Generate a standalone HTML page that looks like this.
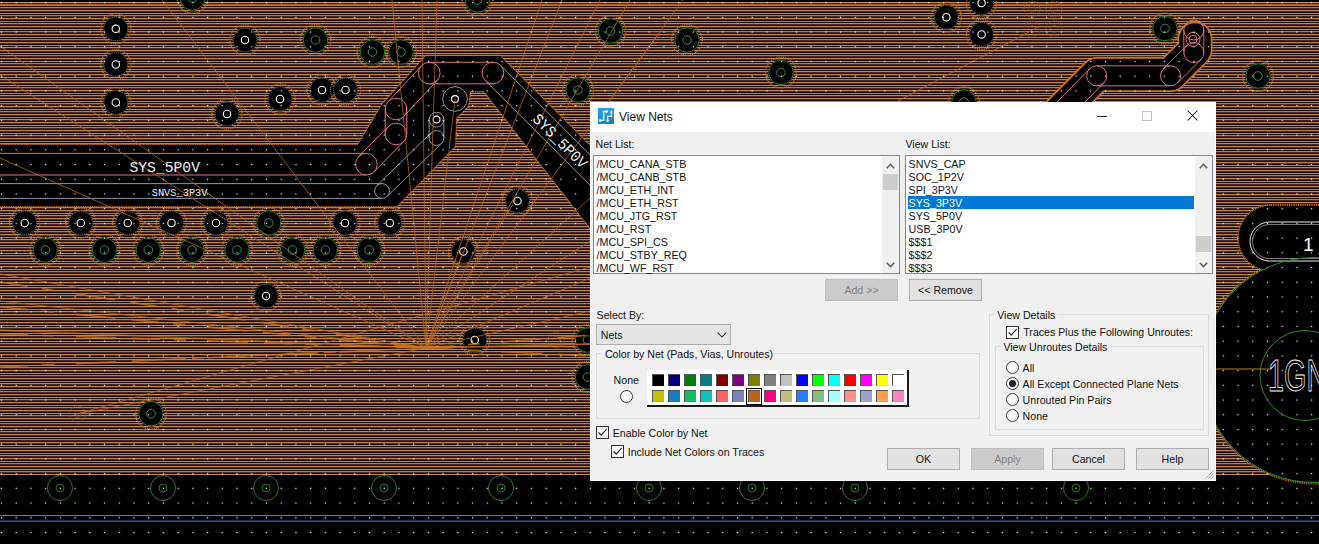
<!DOCTYPE html>
<html><head><meta charset="utf-8"><style>*{margin:0;padding:0;box-sizing:border-box}
html,body{width:1319px;height:544px;overflow:hidden;background:#000}
body{position:relative;font-family:"Liberation Sans",sans-serif;font-size:12px;color:#000}
.pcb{position:absolute;left:0;top:0;display:block}
.dlg{position:absolute;left:590px;top:102px;width:626px;height:379px;background:#f0f0f0;box-shadow:inset 1px 0 #fff,inset -1px 0 #fff,inset 0 -1px #fff}
.dlg>*{position:absolute}
.tb{left:0;top:0;width:626px;height:30px;background:#fff}
.t{white-space:nowrap;line-height:14px;color:#111}
.lb{background:#fff;border:1px solid #828790}
.btn{background:#e1e1e1;border:1px solid #adadad}
.btn.dis{background:#cccccc;border-color:#bfbfbf}
.combo{background:#e5e5e5;border:1px solid #adadad}
.grp{border:1px solid #dcdcdc}
.gtbg{background:#f0f0f0}
.radio{width:13px;height:13px;border-radius:50%;border:1px solid #333;background:#fff}
.radio.sel::after{content:"";position:absolute;left:2px;top:2px;width:7px;height:7px;border-radius:50%;background:#222}
.chk{width:13px;height:13px;border:1px solid #333;background:#fff}
.pal{background:#fff;border-right:2px solid #1a1a1a;border-bottom:2px solid #1a1a1a}
.sw{width:12px;height:12px;border-top:1px solid #555;border-left:1px solid #555}
.swsel{width:16px;height:17px;border:1.6px solid #000}
</style></head>
<body><svg class="pcb" width="1319" height="544" viewBox="0 0 1319 544"><defs>
<pattern id="st" x="0" y="2" width="40" height="24" patternUnits="userSpaceOnUse"><rect width="40" height="24" fill="#1e0600"/><rect y="0" width="40" height="1" fill="#c08a50"/><rect y="1" width="40" height="1" fill="#4a2c14"/><rect y="3" width="40" height="1" fill="#c08a50"/><rect y="5" width="40" height="1" fill="#d47a22"/><rect y="6" width="40" height="1" fill="#4a2c14"/><rect y="8" width="40" height="1" fill="#c08a50"/><rect y="9" width="40" height="1" fill="#4a2c14"/><rect y="11" width="40" height="1" fill="#c08a50"/><rect y="13" width="40" height="1" fill="#d47a22"/><rect y="14" width="40" height="1" fill="#4a2c14"/><rect y="16" width="40" height="1" fill="#c08a50"/><rect y="17" width="40" height="1" fill="#4a2c14"/><rect y="19" width="40" height="1" fill="#d47a22"/><rect y="21" width="40" height="1" fill="#c08a50"/><rect y="22" width="40" height="1" fill="#4a2c14"/></pattern>
<pattern id="dt" x="-5.86" y="-4.76" width="14.72" height="14.72" patternUnits="userSpaceOnUse"><rect x="6.75" y="6.75" width="1.25" height="1.25" fill="#f4f4f4"/></pattern>
</defs><rect width="1319" height="544" fill="#000"/>
<rect x="0" y="2" width="1319" height="473" fill="url(#st)"/>
<rect x="0" y="4.3" width="1319" height="1.6" fill="#d87818"/>
<path d="M-10 145 L358 145 L382 105 L426 56 L500 56 L740 296 L640 292 L484 91 L470 91 L468 106 L456 118 L455 146 L397 206 L-10 206 Z" fill="#000" stroke="#d07416" stroke-width="3" stroke-linejoin="round" stroke-dasharray="0.9 0.9"/>
<circle cx="455" cy="99" r="14" fill="#000" stroke="#d07416" stroke-width="1.5" stroke-dasharray="0.9 0.9"/>
<path d="M-10 145 L358 145 L382 105 L426 56 L500 56 L740 296 L640 292 L484 91 L470 91 L468 106 L456 118 L455 146 L397 206 L-10 206 Z" fill="#000"/>
<circle cx="455" cy="99" r="13" fill="#000"/>
<path d="M1030 142 L1097 74.5 L1170.5 74.5 L1195 50 L1195 39" stroke="#d07416" stroke-width="35" fill="none" stroke-linejoin="round" stroke-linecap="round" stroke-dasharray="0.9 0.9"/>
<path d="M1030 142 L1097 74.5 L1170.5 74.5 L1195 50 L1195 39" stroke="#000" stroke-width="31.5" fill="none" stroke-linejoin="round" stroke-linecap="round"/>
<circle cx="1314" cy="370" r="113.5" fill="#000" stroke="#d07416" stroke-width="2" stroke-dasharray="0.9 0.9"/>
<rect x="1238" y="205" width="140" height="66" rx="33" fill="#000" stroke="#d07416" stroke-width="2" stroke-dasharray="0.9 0.9"/>
<circle cx="1314" cy="370" r="112.5" fill="#000"/>
<rect x="1239" y="206" width="140" height="64" rx="32" fill="#000"/>
<circle cx="115.8" cy="28.8" r="15" fill="none" stroke="#c87020" stroke-width="1.4" stroke-dasharray="0.9 0.9"/>
<circle cx="115.8" cy="28.8" r="12.4" fill="#000"/>
<circle cx="115.8" cy="28.8" r="11.9" fill="none" stroke="#7a8494" stroke-width="0.9" stroke-dasharray="1.2 0.8"/>
<circle cx="115.8" cy="28.8" r="3.7" fill="none" stroke="#fff" stroke-width="1.1"/>
<circle cx="115.8" cy="64.5" r="15" fill="none" stroke="#c87020" stroke-width="1.4" stroke-dasharray="0.9 0.9"/>
<circle cx="115.8" cy="64.5" r="12.4" fill="#000"/>
<circle cx="115.8" cy="64.5" r="11.9" fill="none" stroke="#7a8494" stroke-width="0.9" stroke-dasharray="1.2 0.8"/>
<circle cx="115.8" cy="64.5" r="3.7" fill="none" stroke="#fff" stroke-width="1.1"/>
<circle cx="115.8" cy="102.5" r="15" fill="none" stroke="#c87020" stroke-width="1.4" stroke-dasharray="0.9 0.9"/>
<circle cx="115.8" cy="102.5" r="12.4" fill="#000"/>
<circle cx="115.8" cy="102.5" r="11.9" fill="none" stroke="#7a8494" stroke-width="0.9" stroke-dasharray="1.2 0.8"/>
<circle cx="115.8" cy="102.5" r="3.7" fill="none" stroke="#fff" stroke-width="1.1"/>
<circle cx="245" cy="40" r="15" fill="none" stroke="#c87020" stroke-width="1.4" stroke-dasharray="0.9 0.9"/>
<circle cx="245" cy="40" r="12.4" fill="#000"/>
<circle cx="245" cy="40" r="11.9" fill="none" stroke="#7a8494" stroke-width="0.9" stroke-dasharray="1.2 0.8"/>
<circle cx="245" cy="40" r="3.7" fill="none" stroke="#fff" stroke-width="1.1"/>
<circle cx="280" cy="99" r="15" fill="none" stroke="#c87020" stroke-width="1.4" stroke-dasharray="0.9 0.9"/>
<circle cx="280" cy="99" r="12.4" fill="#000"/>
<circle cx="280" cy="99" r="11.9" fill="none" stroke="#7a8494" stroke-width="0.9" stroke-dasharray="1.2 0.8"/>
<circle cx="280" cy="99" r="3.7" fill="none" stroke="#fff" stroke-width="1.1"/>
<circle cx="322" cy="90" r="15" fill="none" stroke="#c87020" stroke-width="1.4" stroke-dasharray="0.9 0.9"/>
<circle cx="322" cy="90" r="12.4" fill="#000"/>
<circle cx="322" cy="90" r="11.9" fill="none" stroke="#7a8494" stroke-width="0.9" stroke-dasharray="1.2 0.8"/>
<circle cx="322" cy="90" r="3.7" fill="none" stroke="#fff" stroke-width="1.1"/>
<circle cx="345.5" cy="90" r="15" fill="none" stroke="#c87020" stroke-width="1.4" stroke-dasharray="0.9 0.9"/>
<circle cx="345.5" cy="90" r="12.4" fill="#000"/>
<circle cx="345.5" cy="90" r="11.9" fill="none" stroke="#7a8494" stroke-width="0.9" stroke-dasharray="1.2 0.8"/>
<circle cx="345.5" cy="90" r="3.7" fill="none" stroke="#fff" stroke-width="1.1"/>
<circle cx="227" cy="114" r="15" fill="none" stroke="#c87020" stroke-width="1.4" stroke-dasharray="0.9 0.9"/>
<circle cx="227" cy="114" r="12.4" fill="#000"/>
<circle cx="227" cy="114" r="11.9" fill="none" stroke="#7a8494" stroke-width="0.9" stroke-dasharray="1.2 0.8"/>
<circle cx="227" cy="114" r="3.7" fill="none" stroke="#fff" stroke-width="1.1"/>
<circle cx="946.4" cy="17.2" r="15" fill="none" stroke="#c87020" stroke-width="1.4" stroke-dasharray="0.9 0.9"/>
<circle cx="946.4" cy="17.2" r="12.4" fill="#000"/>
<circle cx="946.4" cy="17.2" r="11.9" fill="none" stroke="#7a8494" stroke-width="0.9" stroke-dasharray="1.2 0.8"/>
<circle cx="946.4" cy="17.2" r="3.7" fill="none" stroke="#fff" stroke-width="1.1"/>
<circle cx="981.6" cy="3" r="15" fill="none" stroke="#c87020" stroke-width="1.4" stroke-dasharray="0.9 0.9"/>
<circle cx="981.6" cy="3" r="12.4" fill="#000"/>
<circle cx="981.6" cy="3" r="11.9" fill="none" stroke="#7a8494" stroke-width="0.9" stroke-dasharray="1.2 0.8"/>
<circle cx="981.6" cy="3" r="3.7" fill="none" stroke="#fff" stroke-width="1.1"/>
<circle cx="981.6" cy="34.4" r="15" fill="none" stroke="#c87020" stroke-width="1.4" stroke-dasharray="0.9 0.9"/>
<circle cx="981.6" cy="34.4" r="12.4" fill="#000"/>
<circle cx="981.6" cy="34.4" r="11.9" fill="none" stroke="#7a8494" stroke-width="0.9" stroke-dasharray="1.2 0.8"/>
<circle cx="981.6" cy="34.4" r="3.7" fill="none" stroke="#fff" stroke-width="1.1"/>
<circle cx="24.7" cy="223" r="15" fill="none" stroke="#c87020" stroke-width="1.4" stroke-dasharray="0.9 0.9"/>
<circle cx="24.7" cy="223" r="12.4" fill="#000"/>
<circle cx="24.7" cy="223" r="11.9" fill="none" stroke="#7a8494" stroke-width="0.9" stroke-dasharray="1.2 0.8"/>
<circle cx="24.7" cy="223" r="3.7" fill="none" stroke="#fff" stroke-width="1.1"/>
<circle cx="80.8" cy="223" r="15" fill="none" stroke="#c87020" stroke-width="1.4" stroke-dasharray="0.9 0.9"/>
<circle cx="80.8" cy="223" r="12.4" fill="#000"/>
<circle cx="80.8" cy="223" r="11.9" fill="none" stroke="#7a8494" stroke-width="0.9" stroke-dasharray="1.2 0.8"/>
<circle cx="80.8" cy="223" r="3.7" fill="none" stroke="#fff" stroke-width="1.1"/>
<circle cx="127.7" cy="223" r="15" fill="none" stroke="#c87020" stroke-width="1.4" stroke-dasharray="0.9 0.9"/>
<circle cx="127.7" cy="223" r="12.4" fill="#000"/>
<circle cx="127.7" cy="223" r="11.9" fill="none" stroke="#7a8494" stroke-width="0.9" stroke-dasharray="1.2 0.8"/>
<circle cx="127.7" cy="223" r="3.7" fill="none" stroke="#fff" stroke-width="1.1"/>
<circle cx="171.5" cy="223" r="15" fill="none" stroke="#c87020" stroke-width="1.4" stroke-dasharray="0.9 0.9"/>
<circle cx="171.5" cy="223" r="12.4" fill="#000"/>
<circle cx="171.5" cy="223" r="11.9" fill="none" stroke="#7a8494" stroke-width="0.9" stroke-dasharray="1.2 0.8"/>
<circle cx="171.5" cy="223" r="3.7" fill="none" stroke="#fff" stroke-width="1.1"/>
<circle cx="216" cy="223" r="15" fill="none" stroke="#c87020" stroke-width="1.4" stroke-dasharray="0.9 0.9"/>
<circle cx="216" cy="223" r="12.4" fill="#000"/>
<circle cx="216" cy="223" r="11.9" fill="none" stroke="#7a8494" stroke-width="0.9" stroke-dasharray="1.2 0.8"/>
<circle cx="216" cy="223" r="3.7" fill="none" stroke="#fff" stroke-width="1.1"/>
<circle cx="345" cy="223" r="15" fill="none" stroke="#c87020" stroke-width="1.4" stroke-dasharray="0.9 0.9"/>
<circle cx="345" cy="223" r="12.4" fill="#000"/>
<circle cx="345" cy="223" r="11.9" fill="none" stroke="#7a8494" stroke-width="0.9" stroke-dasharray="1.2 0.8"/>
<circle cx="345" cy="223" r="3.7" fill="none" stroke="#fff" stroke-width="1.1"/>
<circle cx="389.8" cy="223" r="15" fill="none" stroke="#c87020" stroke-width="1.4" stroke-dasharray="0.9 0.9"/>
<circle cx="389.8" cy="223" r="12.4" fill="#000"/>
<circle cx="389.8" cy="223" r="11.9" fill="none" stroke="#7a8494" stroke-width="0.9" stroke-dasharray="1.2 0.8"/>
<circle cx="389.8" cy="223" r="3.7" fill="none" stroke="#fff" stroke-width="1.1"/>
<circle cx="517.5" cy="201" r="15" fill="none" stroke="#c87020" stroke-width="1.4" stroke-dasharray="0.9 0.9"/>
<circle cx="517.5" cy="201" r="12.4" fill="#000"/>
<circle cx="517.5" cy="201" r="11.9" fill="none" stroke="#7a8494" stroke-width="0.9" stroke-dasharray="1.2 0.8"/>
<circle cx="517.5" cy="201" r="3.7" fill="none" stroke="#fff" stroke-width="1.1"/>
<circle cx="463.4" cy="251.5" r="15" fill="none" stroke="#c87020" stroke-width="1.4" stroke-dasharray="0.9 0.9"/>
<circle cx="463.4" cy="251.5" r="12.4" fill="#000"/>
<circle cx="463.4" cy="251.5" r="11.9" fill="none" stroke="#7a8494" stroke-width="0.9" stroke-dasharray="1.2 0.8"/>
<circle cx="463.4" cy="251.5" r="3.7" fill="none" stroke="#fff" stroke-width="1.1"/>
<circle cx="266" cy="296" r="15" fill="none" stroke="#c87020" stroke-width="1.4" stroke-dasharray="0.9 0.9"/>
<circle cx="266" cy="296" r="12.4" fill="#000"/>
<circle cx="266" cy="296" r="11.9" fill="none" stroke="#7a8494" stroke-width="0.9" stroke-dasharray="1.2 0.8"/>
<circle cx="266" cy="296" r="3.7" fill="none" stroke="#fff" stroke-width="1.1"/>
<circle cx="474.8" cy="340" r="15" fill="none" stroke="#c87020" stroke-width="1.4" stroke-dasharray="0.9 0.9"/>
<circle cx="474.8" cy="340" r="12.4" fill="#000"/>
<circle cx="474.8" cy="340" r="11.9" fill="none" stroke="#7a8494" stroke-width="0.9" stroke-dasharray="1.2 0.8"/>
<circle cx="474.8" cy="340" r="3.7" fill="none" stroke="#fff" stroke-width="1.1"/>
<circle cx="192.5" cy="-2" r="15.3" fill="none" stroke="#c87020" stroke-width="1.4" stroke-dasharray="0.9 0.9"/>
<circle cx="192.5" cy="-2" r="12.8" fill="#000"/>
<circle cx="192.5" cy="-2" r="12.2" fill="none" stroke="#2a8a2a" stroke-width="0.9"/>
<circle cx="192.5" cy="-2" r="4.3" fill="none" stroke="#3a9a5a" stroke-width="0.9"/>
<circle cx="315.5" cy="40" r="15.3" fill="none" stroke="#c87020" stroke-width="1.4" stroke-dasharray="0.9 0.9"/>
<circle cx="315.5" cy="40" r="12.8" fill="#000"/>
<circle cx="315.5" cy="40" r="12.2" fill="none" stroke="#2a8a2a" stroke-width="0.9"/>
<circle cx="315.5" cy="40" r="4.3" fill="none" stroke="#3a9a5a" stroke-width="0.9"/>
<circle cx="372.5" cy="52" r="15.3" fill="none" stroke="#c87020" stroke-width="1.4" stroke-dasharray="0.9 0.9"/>
<circle cx="372.5" cy="52" r="12.8" fill="#000"/>
<circle cx="372.5" cy="52" r="12.2" fill="none" stroke="#2a8a2a" stroke-width="0.9"/>
<circle cx="372.5" cy="52" r="4.3" fill="none" stroke="#3a9a5a" stroke-width="0.9"/>
<circle cx="401" cy="52" r="15.3" fill="none" stroke="#c87020" stroke-width="1.4" stroke-dasharray="0.9 0.9"/>
<circle cx="401" cy="52" r="12.8" fill="#000"/>
<circle cx="401" cy="52" r="12.2" fill="none" stroke="#2a8a2a" stroke-width="0.9"/>
<circle cx="401" cy="52" r="4.3" fill="none" stroke="#3a9a5a" stroke-width="0.9"/>
<circle cx="477.5" cy="0" r="15.3" fill="none" stroke="#c87020" stroke-width="1.4" stroke-dasharray="0.9 0.9"/>
<circle cx="477.5" cy="0" r="12.8" fill="#000"/>
<circle cx="477.5" cy="0" r="12.2" fill="none" stroke="#2a8a2a" stroke-width="0.9"/>
<circle cx="477.5" cy="0" r="4.3" fill="none" stroke="#3a9a5a" stroke-width="0.9"/>
<circle cx="610.5" cy="31" r="15.3" fill="none" stroke="#c87020" stroke-width="1.4" stroke-dasharray="0.9 0.9"/>
<circle cx="610.5" cy="31" r="12.8" fill="#000"/>
<circle cx="610.5" cy="31" r="12.2" fill="none" stroke="#2a8a2a" stroke-width="0.9"/>
<circle cx="610.5" cy="31" r="4.3" fill="none" stroke="#3a9a5a" stroke-width="0.9"/>
<circle cx="578" cy="90" r="15.3" fill="none" stroke="#c87020" stroke-width="1.4" stroke-dasharray="0.9 0.9"/>
<circle cx="578" cy="90" r="12.8" fill="#000"/>
<circle cx="578" cy="90" r="12.2" fill="none" stroke="#2a8a2a" stroke-width="0.9"/>
<circle cx="578" cy="90" r="4.3" fill="none" stroke="#3a9a5a" stroke-width="0.9"/>
<circle cx="687" cy="40" r="15.3" fill="none" stroke="#c87020" stroke-width="1.4" stroke-dasharray="0.9 0.9"/>
<circle cx="687" cy="40" r="12.8" fill="#000"/>
<circle cx="687" cy="40" r="12.2" fill="none" stroke="#2a8a2a" stroke-width="0.9"/>
<circle cx="687" cy="40" r="4.3" fill="none" stroke="#3a9a5a" stroke-width="0.9"/>
<circle cx="781" cy="72.5" r="15.3" fill="none" stroke="#c87020" stroke-width="1.4" stroke-dasharray="0.9 0.9"/>
<circle cx="781" cy="72.5" r="12.8" fill="#000"/>
<circle cx="781" cy="72.5" r="12.2" fill="none" stroke="#2a8a2a" stroke-width="0.9"/>
<circle cx="781" cy="72.5" r="4.3" fill="none" stroke="#3a9a5a" stroke-width="0.9"/>
<circle cx="964" cy="102" r="15.3" fill="none" stroke="#c87020" stroke-width="1.4" stroke-dasharray="0.9 0.9"/>
<circle cx="964" cy="102" r="12.8" fill="#000"/>
<circle cx="964" cy="102" r="12.2" fill="none" stroke="#2a8a2a" stroke-width="0.9"/>
<circle cx="964" cy="102" r="4.3" fill="none" stroke="#3a9a5a" stroke-width="0.9"/>
<circle cx="268.8" cy="223" r="15.3" fill="none" stroke="#c87020" stroke-width="1.4" stroke-dasharray="0.9 0.9"/>
<circle cx="268.8" cy="223" r="12.8" fill="#000"/>
<circle cx="268.8" cy="223" r="12.2" fill="none" stroke="#2a8a2a" stroke-width="0.9"/>
<circle cx="268.8" cy="223" r="4.3" fill="none" stroke="#3a9a5a" stroke-width="0.9"/>
<circle cx="45.3" cy="250" r="15.3" fill="none" stroke="#c87020" stroke-width="1.4" stroke-dasharray="0.9 0.9"/>
<circle cx="45.3" cy="250" r="12.8" fill="#000"/>
<circle cx="45.3" cy="250" r="12.2" fill="none" stroke="#2a8a2a" stroke-width="0.9"/>
<circle cx="45.3" cy="250" r="4.3" fill="none" stroke="#3a9a5a" stroke-width="0.9"/>
<circle cx="104.5" cy="250" r="15.3" fill="none" stroke="#c87020" stroke-width="1.4" stroke-dasharray="0.9 0.9"/>
<circle cx="104.5" cy="250" r="12.8" fill="#000"/>
<circle cx="104.5" cy="250" r="12.2" fill="none" stroke="#2a8a2a" stroke-width="0.9"/>
<circle cx="104.5" cy="250" r="4.3" fill="none" stroke="#3a9a5a" stroke-width="0.9"/>
<circle cx="148.3" cy="250" r="15.3" fill="none" stroke="#c87020" stroke-width="1.4" stroke-dasharray="0.9 0.9"/>
<circle cx="148.3" cy="250" r="12.8" fill="#000"/>
<circle cx="148.3" cy="250" r="12.2" fill="none" stroke="#2a8a2a" stroke-width="0.9"/>
<circle cx="148.3" cy="250" r="4.3" fill="none" stroke="#3a9a5a" stroke-width="0.9"/>
<circle cx="192" cy="250" r="15.3" fill="none" stroke="#c87020" stroke-width="1.4" stroke-dasharray="0.9 0.9"/>
<circle cx="192" cy="250" r="12.8" fill="#000"/>
<circle cx="192" cy="250" r="12.2" fill="none" stroke="#2a8a2a" stroke-width="0.9"/>
<circle cx="192" cy="250" r="4.3" fill="none" stroke="#3a9a5a" stroke-width="0.9"/>
<circle cx="237" cy="250" r="15.3" fill="none" stroke="#c87020" stroke-width="1.4" stroke-dasharray="0.9 0.9"/>
<circle cx="237" cy="250" r="12.8" fill="#000"/>
<circle cx="237" cy="250" r="12.2" fill="none" stroke="#2a8a2a" stroke-width="0.9"/>
<circle cx="237" cy="250" r="4.3" fill="none" stroke="#3a9a5a" stroke-width="0.9"/>
<circle cx="292.5" cy="250" r="15.3" fill="none" stroke="#c87020" stroke-width="1.4" stroke-dasharray="0.9 0.9"/>
<circle cx="292.5" cy="250" r="12.8" fill="#000"/>
<circle cx="292.5" cy="250" r="12.2" fill="none" stroke="#2a8a2a" stroke-width="0.9"/>
<circle cx="292.5" cy="250" r="4.3" fill="none" stroke="#3a9a5a" stroke-width="0.9"/>
<circle cx="325.4" cy="250" r="15.3" fill="none" stroke="#c87020" stroke-width="1.4" stroke-dasharray="0.9 0.9"/>
<circle cx="325.4" cy="250" r="12.8" fill="#000"/>
<circle cx="325.4" cy="250" r="12.2" fill="none" stroke="#2a8a2a" stroke-width="0.9"/>
<circle cx="325.4" cy="250" r="4.3" fill="none" stroke="#3a9a5a" stroke-width="0.9"/>
<circle cx="369.2" cy="250" r="15.3" fill="none" stroke="#c87020" stroke-width="1.4" stroke-dasharray="0.9 0.9"/>
<circle cx="369.2" cy="250" r="12.8" fill="#000"/>
<circle cx="369.2" cy="250" r="12.2" fill="none" stroke="#2a8a2a" stroke-width="0.9"/>
<circle cx="369.2" cy="250" r="4.3" fill="none" stroke="#3a9a5a" stroke-width="0.9"/>
<circle cx="151" cy="413.7" r="15.3" fill="none" stroke="#c87020" stroke-width="1.4" stroke-dasharray="0.9 0.9"/>
<circle cx="151" cy="413.7" r="12.8" fill="#000"/>
<circle cx="151" cy="413.7" r="12.2" fill="none" stroke="#2a8a2a" stroke-width="0.9"/>
<circle cx="151" cy="413.7" r="4.3" fill="none" stroke="#3a9a5a" stroke-width="0.9"/>
<circle cx="587.5" cy="340" r="15.3" fill="none" stroke="#c87020" stroke-width="1.4" stroke-dasharray="0.9 0.9"/>
<circle cx="587.5" cy="340" r="12.8" fill="#000"/>
<circle cx="587.5" cy="340" r="12.2" fill="none" stroke="#2a8a2a" stroke-width="0.9"/>
<circle cx="587.5" cy="340" r="4.3" fill="none" stroke="#3a9a5a" stroke-width="0.9"/>
<circle cx="587.5" cy="377" r="15.3" fill="none" stroke="#c87020" stroke-width="1.4" stroke-dasharray="0.9 0.9"/>
<circle cx="587.5" cy="377" r="12.8" fill="#000"/>
<circle cx="587.5" cy="377" r="12.2" fill="none" stroke="#2a8a2a" stroke-width="0.9"/>
<circle cx="587.5" cy="377" r="4.3" fill="none" stroke="#3a9a5a" stroke-width="0.9"/>
<circle cx="1165" cy="28.5" r="15.3" fill="none" stroke="#c87020" stroke-width="1.4" stroke-dasharray="0.9 0.9"/>
<circle cx="1165" cy="28.5" r="12.8" fill="#000"/>
<circle cx="1165" cy="28.5" r="12.2" fill="none" stroke="#2a8a2a" stroke-width="0.9"/>
<circle cx="1165" cy="28.5" r="4.3" fill="none" stroke="#3a9a5a" stroke-width="0.9"/>
<circle cx="1258" cy="76" r="15.3" fill="none" stroke="#c87020" stroke-width="1.4" stroke-dasharray="0.9 0.9"/>
<circle cx="1258" cy="76" r="12.8" fill="#000"/>
<circle cx="1258" cy="76" r="12.2" fill="none" stroke="#2a8a2a" stroke-width="0.9"/>
<circle cx="1258" cy="76" r="4.3" fill="none" stroke="#3a9a5a" stroke-width="0.9"/>
<circle cx="77.5" cy="414" r="8" fill="none" stroke="#b06018" stroke-width="1" stroke-dasharray="0.9 0.9"/>
<circle cx="77.5" cy="414" r="3.5" fill="none" stroke="#b06018" stroke-width="0.8" stroke-dasharray="0.9 0.9"/>
<circle cx="556" cy="340" r="8" fill="none" stroke="#b06018" stroke-width="1" stroke-dasharray="0.9 0.9"/>
<circle cx="556" cy="340" r="3.5" fill="none" stroke="#b06018" stroke-width="0.8" stroke-dasharray="0.9 0.9"/>
<circle cx="1032" cy="9" r="8" fill="none" stroke="#b06018" stroke-width="1" stroke-dasharray="0.9 0.9"/>
<circle cx="1032" cy="9" r="3.5" fill="none" stroke="#b06018" stroke-width="0.8" stroke-dasharray="0.9 0.9"/>
<circle cx="1054" cy="9" r="8" fill="none" stroke="#b06018" stroke-width="1" stroke-dasharray="0.9 0.9"/>
<circle cx="1054" cy="9" r="3.5" fill="none" stroke="#b06018" stroke-width="0.8" stroke-dasharray="0.9 0.9"/>
<circle cx="1032" cy="29" r="8" fill="none" stroke="#b06018" stroke-width="1" stroke-dasharray="0.9 0.9"/>
<circle cx="1032" cy="29" r="3.5" fill="none" stroke="#b06018" stroke-width="0.8" stroke-dasharray="0.9 0.9"/>
<circle cx="1054" cy="29" r="8" fill="none" stroke="#b06018" stroke-width="1" stroke-dasharray="0.9 0.9"/>
<circle cx="1054" cy="29" r="3.5" fill="none" stroke="#b06018" stroke-width="0.8" stroke-dasharray="0.9 0.9"/>
<path d="M-20.0 175.0 L366.4 175.0 M-20.0 153.4 L366.4 153.4 M374.1 171.8 L403.7 141.6 M358.7 156.6 L388.3 126.4 M406.8 134.0 L406.8 109.0 M385.2 134.0 L385.2 109.0 M403.9 116.3 L437.2 80.4 M388.1 101.7 L421.4 65.8 M429.3 83.9 L493.0 83.8 M429.3 62.3 L493.0 62.2 M485.4 80.6 L685.4 280.6 M500.6 65.4 L700.6 265.4 " stroke="#e0707e" stroke-width="1.0" fill="none"/>
<circle cx="-20" cy="164.2" r="10.8" fill="none" stroke="#e0707e" stroke-width="1.0"/>
<circle cx="366.4" cy="164.2" r="10.8" fill="none" stroke="#e0707e" stroke-width="1.0"/>
<circle cx="396" cy="134" r="10.8" fill="none" stroke="#e0707e" stroke-width="1.0"/>
<circle cx="396" cy="109" r="10.8" fill="none" stroke="#e0707e" stroke-width="1.0"/>
<circle cx="429.3" cy="73.1" r="10.8" fill="none" stroke="#e0707e" stroke-width="1.0"/>
<circle cx="493" cy="73" r="10.8" fill="none" stroke="#e0707e" stroke-width="1.0"/>
<circle cx="693" cy="273" r="10.8" fill="none" stroke="#e0707e" stroke-width="1.0"/>
<path d="M-20.0 198.4 L382.0 198.4 M-20.0 183.6 L382.0 183.6 M387.2 196.3 L441.7 143.3 M376.8 185.7 L431.3 132.7 M443.9 138.0 L443.9 119.7 M429.1 138.0 L429.1 119.7 " stroke="#8e94a2" stroke-width="1.0" fill="none"/>
<circle cx="-20" cy="191" r="7.4" fill="none" stroke="#8e94a2" stroke-width="1.0"/>
<circle cx="382" cy="191" r="7.4" fill="none" stroke="#8e94a2" stroke-width="1.0"/>
<circle cx="436.5" cy="138" r="7.4" fill="none" stroke="#8e94a2" stroke-width="1.0"/>
<circle cx="436.5" cy="119.7" r="7.4" fill="none" stroke="#8e94a2" stroke-width="1.0"/>
<circle cx="455" cy="99" r="12.3" fill="none" stroke="#8e94a2" stroke-width="1"/>
<circle cx="455" cy="99" r="3.4" fill="none" stroke="#fff" stroke-width="1.1"/>
<circle cx="436.6" cy="119.5" r="3.4" fill="none" stroke="#fff" stroke-width="1.1"/>
<path d="M1037.1 151.0 L1103.8 82.8 M1022.9 137.0 L1089.6 68.8 M1096.7 85.8 L1170.5 85.8 M1096.7 65.8 L1170.5 65.8 M1177.6 82.9 L1200.9 59.7 M1163.4 68.7 L1186.7 45.5 M1203.8 52.6 L1203.8 30.0 M1183.8 52.6 L1183.8 30.0 " stroke="#e0707e" stroke-width="1.0" fill="none"/>
<circle cx="1030" cy="144" r="10" fill="none" stroke="#e0707e" stroke-width="1.0"/>
<circle cx="1096.7" cy="75.8" r="10" fill="none" stroke="#e0707e" stroke-width="1.0"/>
<circle cx="1170.5" cy="75.8" r="10" fill="none" stroke="#e0707e" stroke-width="1.0"/>
<circle cx="1193.8" cy="52.6" r="10" fill="none" stroke="#e0707e" stroke-width="1.0"/>
<circle cx="1193.8" cy="30" r="10" fill="none" stroke="#e0707e" stroke-width="1.0"/>
<circle cx="1193" cy="39.4" r="4" fill="none" stroke="#e0707e" stroke-width="1"/>
<circle cx="1193" cy="39.4" r="7" fill="none" stroke="#e0707e" stroke-width="1"/>
<line x1="426" y1="348" x2="162" y2="0" stroke="#c06a18" stroke-width="0.75"/>
<line x1="426" y1="348" x2="0" y2="46" stroke="#c06a18" stroke-width="0.75"/>
<line x1="426" y1="348" x2="0" y2="75" stroke="#c06a18" stroke-width="0.75"/>
<line x1="426" y1="348" x2="0" y2="158" stroke="#c06a18" stroke-width="0.75"/>
<line x1="426" y1="348" x2="0" y2="274" stroke="#c06a18" stroke-width="0.75"/>
<line x1="426" y1="348" x2="0" y2="301" stroke="#c06a18" stroke-width="0.75"/>
<line x1="426" y1="348" x2="77" y2="414" stroke="#c06a18" stroke-width="0.75"/>
<line x1="426" y1="348" x2="392" y2="0" stroke="#c06a18" stroke-width="0.75"/>
<line x1="426" y1="348" x2="422" y2="0" stroke="#c06a18" stroke-width="0.75"/>
<line x1="426" y1="348" x2="437" y2="0" stroke="#c06a18" stroke-width="0.75"/>
<line x1="426" y1="348" x2="455" y2="99" stroke="#c06a18" stroke-width="0.75"/>
<line x1="426" y1="348" x2="542" y2="0" stroke="#c06a18" stroke-width="0.75"/>
<line x1="426" y1="348" x2="562" y2="0" stroke="#c06a18" stroke-width="0.75"/>
<line x1="426" y1="348" x2="600" y2="0" stroke="#c06a18" stroke-width="0.75"/>
<line x1="426" y1="348" x2="630" y2="0" stroke="#c06a18" stroke-width="0.75"/>
<line x1="426" y1="348" x2="660" y2="32" stroke="#c06a18" stroke-width="0.75"/>
<line x1="426" y1="348" x2="590" y2="198" stroke="#c06a18" stroke-width="0.75"/>
<line x1="426" y1="348" x2="590" y2="241" stroke="#c06a18" stroke-width="0.75"/>
<line x1="426" y1="348" x2="590" y2="278" stroke="#c06a18" stroke-width="0.75"/>
<line x1="426" y1="348" x2="590" y2="311" stroke="#c06a18" stroke-width="0.75"/>
<line x1="426" y1="348" x2="590" y2="344" stroke="#c06a18" stroke-width="0.75"/>
<line x1="426" y1="348" x2="516" y2="199" stroke="#c06a18" stroke-width="0.75"/>
<line x1="426" y1="348" x2="463" y2="252" stroke="#c06a18" stroke-width="0.75"/>
<line x1="590" y1="267" x2="77" y2="414" stroke="#c06a18" stroke-width="0.75"/>
<line x1="898" y1="101" x2="1040" y2="26" stroke="#c06a18" stroke-width="0.75"/>
<line x1="683" y1="0" x2="590" y2="128" stroke="#c06a18" stroke-width="0.75"/>
<path d="M0 330 L426 348 L590 344" stroke="#d07416" stroke-width="1.6" fill="none" opacity="0.6"/>
<path d="M0 282 L426 348 M0 307 L426 348 M0 334 L426 348 M0 367 L426 348 M150 360 L426 348 M426 348 L590 335 M426 348 L590 356" stroke="#d47818" stroke-width="1.7" fill="none" opacity="0.75" stroke-dasharray="28 14 12 22 40 16"/>
<rect x="0" y="0" width="1319" height="544" fill="url(#dt)"/>
<rect x="0" y="515" width="1319" height="1.1" fill="#4a78d8"/>
<rect x="0" y="520.6" width="1319" height="1.1" fill="#4a78d8"/>
<circle cx="60" cy="488" r="12.5" fill="none" stroke="#2a8a2a" stroke-width="0.9"/>
<circle cx="60" cy="488" r="4" fill="none" stroke="#2a8a2a" stroke-width="0.9"/>
<circle cx="163" cy="488" r="12.5" fill="none" stroke="#2a8a2a" stroke-width="0.9"/>
<circle cx="163" cy="488" r="4" fill="none" stroke="#2a8a2a" stroke-width="0.9"/>
<circle cx="266" cy="488" r="12.5" fill="none" stroke="#2a8a2a" stroke-width="0.9"/>
<circle cx="266" cy="488" r="4" fill="none" stroke="#2a8a2a" stroke-width="0.9"/>
<circle cx="384" cy="488" r="12.5" fill="none" stroke="#2a8a2a" stroke-width="0.9"/>
<circle cx="384" cy="488" r="4" fill="none" stroke="#2a8a2a" stroke-width="0.9"/>
<circle cx="501" cy="488" r="12.5" fill="none" stroke="#2a8a2a" stroke-width="0.9"/>
<circle cx="501" cy="488" r="4" fill="none" stroke="#2a8a2a" stroke-width="0.9"/>
<circle cx="649" cy="488" r="12.5" fill="none" stroke="#2a8a2a" stroke-width="0.9"/>
<circle cx="649" cy="488" r="4" fill="none" stroke="#2a8a2a" stroke-width="0.9"/>
<circle cx="752" cy="488" r="12.5" fill="none" stroke="#2a8a2a" stroke-width="0.9"/>
<circle cx="752" cy="488" r="4" fill="none" stroke="#2a8a2a" stroke-width="0.9"/>
<circle cx="855" cy="488" r="12.5" fill="none" stroke="#2a8a2a" stroke-width="0.9"/>
<circle cx="855" cy="488" r="4" fill="none" stroke="#2a8a2a" stroke-width="0.9"/>
<circle cx="1076" cy="488" r="12.5" fill="none" stroke="#2a8a2a" stroke-width="0.9"/>
<circle cx="1076" cy="488" r="4" fill="none" stroke="#2a8a2a" stroke-width="0.9"/>
<rect x="1250" y="222" width="120" height="39" rx="19.5" fill="none" stroke="#e8e8e8" stroke-width="1"/>
<rect x="1252.5" y="224.5" width="120" height="34" rx="17" fill="none" stroke="#9a9a9a" stroke-width="0.8"/>
<circle cx="1314" cy="370" r="112.5" fill="none" stroke="#2a8a2a" stroke-width="1"/>
<circle cx="1305" cy="375.5" r="45" fill="none" stroke="#2a8a2a" stroke-width="1"/>
<path d="M1216 369 H1272" stroke="#d07416" stroke-width="1"/>
<text x="129.5" y="172" font-family="Liberation Mono" font-size="15.5" fill="#f0f0f0" textLength="70.5" lengthAdjust="spacingAndGlyphs">SYS_5P0V</text>
<text x="151.7" y="196" font-family="Liberation Mono" font-size="10.5" fill="#f0f0f0" textLength="55.8" lengthAdjust="spacingAndGlyphs">SNVS_3P3V</text>
<text x="0" y="0" font-family="Liberation Mono" font-size="15.5" fill="#f0f0f0" textLength="70" lengthAdjust="spacingAndGlyphs" text-anchor="middle" transform="translate(556.6 144.4) rotate(45)">SYS_5P0V</text>
<text x="1303" y="251" font-family="Liberation Sans" font-size="19" fill="#fff">1</text>
<text x="1268" y="391" font-family="Liberation Sans" font-size="44" fill="none" stroke="#fff" stroke-width="0.9" textLength="80" lengthAdjust="spacingAndGlyphs">1GND</text></svg><div class="dlg">
<div class="tb"></div>
<svg class="ico" style="left:8px;top:6px" width="16" height="16" viewBox="0 0 16 16"><defs><linearGradient id="ig" x1="0" y1="0" x2="0" y2="1"><stop offset="0" stop-color="#2aa6e6"/><stop offset="1" stop-color="#1482c4"/></linearGradient></defs><rect width="16" height="16" fill="url(#ig)"/>
<path d="M2.2 12.4 H5.8 V3.6 H8.6 M9.6 12.6 V8.4 H13.4 V4.2" stroke="#fff" stroke-width="1.15" fill="none"/>
<circle cx="2.2" cy="12.4" r="1.3" fill="#fff"/><circle cx="8.6" cy="3.6" r="1.3" fill="#fff"/><circle cx="9.6" cy="12.6" r="1.3" fill="#fff"/><path d="M11.9 4.6 L13.4 2.4 L14.9 4.6 Z" fill="#fff"/></svg>
<div class="t" style="left:29.0px;top:7.54px;font-size:12px">View Nets</div>
<div class="r" style="left:507px;top:14px;width:10px;height:1px;background:#111"></div>
<div class="r" style="left:552px;top:9px;width:10px;height:10px;border:1px solid #c4c4c4"></div>
<svg class="r" style="left:597px;top:8px" width="11" height="11" viewBox="0 0 11 11"><path d="M0.5 0.5 L10.5 10.5 M10.5 0.5 L0.5 10.5" stroke="#111" stroke-width="1.05"/></svg>
<div class="t" style="left:5.5px;top:35.23px;font-size:10.6px">Net List:</div>
<div class="t" style="left:315.5px;top:35.23px;font-size:10.6px">View List:</div>
<div class="lb" style="left:3px;top:53px;width:307px;height:119px"></div>
<div class="t" style="left:6.6px;top:54.89px;font-size:10.7px;color:#111">/MCU_CANA_STB</div>
<div class="t" style="left:6.6px;top:67.89px;font-size:10.7px;color:#111">/MCU_CANB_STB</div>
<div class="t" style="left:6.6px;top:80.89px;font-size:10.7px;color:#111">/MCU_ETH_INT</div>
<div class="t" style="left:6.6px;top:93.89px;font-size:10.7px;color:#111">/MCU_ETH_RST</div>
<div class="t" style="left:6.6px;top:106.89px;font-size:10.7px;color:#111">/MCU_JTG_RST</div>
<div class="t" style="left:6.6px;top:119.89px;font-size:10.7px;color:#111">/MCU_RST</div>
<div class="t" style="left:6.6px;top:132.89px;font-size:10.7px;color:#111">/MCU_SPI_CS</div>
<div class="t" style="left:6.6px;top:145.89px;font-size:10.7px;color:#111">/MCU_STBY_REQ</div>
<div class="t" style="left:6.6px;top:158.89px;font-size:10.7px;color:#111">/MCU_WF_RST</div>
<div class="r" style="left:292px;top:54px;width:17px;height:117px;background:#f0f0f0"></div>
<svg class="r" style="left:296px;top:61px" width="9" height="6" viewBox="0 0 9 6"><path d="M0.8 5.2 L4.5 1.3 L8.2 5.2" stroke="#606060" stroke-width="1.6" fill="none"/></svg>
<svg class="r" style="left:296px;top:160px" width="9" height="6" viewBox="0 0 9 6"><path d="M0.8 0.8 L4.5 4.7 L8.2 0.8" stroke="#606060" stroke-width="1.6" fill="none"/></svg>
<div class="r" style="left:293px;top:72px;width:15px;height:16px;background:#cdcdcd"></div>
<div class="lb" style="left:315px;top:53px;width:308px;height:119px"></div>
<div class="t" style="left:318.6px;top:54.89px;font-size:10.7px;color:#111">SNVS_CAP</div>
<div class="t" style="left:318.6px;top:67.89px;font-size:10.7px;color:#111">SOC_1P2V</div>
<div class="t" style="left:318.6px;top:80.89px;font-size:10.7px;color:#111">SPI_3P3V</div>
<div class="r" style="left:317.5px;top:94px;width:286.5px;height:13px;background:#0078d7"></div>
<div class="t" style="left:318.6px;top:93.89px;font-size:10.7px;color:#fff">SYS_3P3V</div>
<div class="t" style="left:318.6px;top:106.89px;font-size:10.7px;color:#111">SYS_5P0V</div>
<div class="t" style="left:318.6px;top:119.89px;font-size:10.7px;color:#111">USB_3P0V</div>
<div class="t" style="left:318.6px;top:132.89px;font-size:10.7px;color:#111">$$$1</div>
<div class="t" style="left:318.6px;top:145.89px;font-size:10.7px;color:#111">$$$2</div>
<div class="t" style="left:318.6px;top:158.89px;font-size:10.7px;color:#111">$$$3</div>
<div class="r" style="left:605px;top:54px;width:17px;height:117px;background:#f0f0f0"></div>
<svg class="r" style="left:609px;top:61px" width="9" height="6" viewBox="0 0 9 6"><path d="M0.8 5.2 L4.5 1.3 L8.2 5.2" stroke="#606060" stroke-width="1.6" fill="none"/></svg>
<svg class="r" style="left:609px;top:160px" width="9" height="6" viewBox="0 0 9 6"><path d="M0.8 0.8 L4.5 4.7 L8.2 0.8" stroke="#606060" stroke-width="1.6" fill="none"/></svg>
<div class="r" style="left:606px;top:134px;width:15px;height:16px;background:#cdcdcd"></div>
<div class="btn dis" style="left:235px;top:177px;width:73px;height:22px"></div>
<div class="t bt" style="left:235px;top:181.3px;width:73px;font-size:10.6px;text-align:center;color:#838383">Add &gt;&gt;</div>
<div class="btn" style="left:319px;top:177px;width:73px;height:22px"></div>
<div class="t bt" style="left:319px;top:181.3px;width:73px;font-size:10.6px;text-align:center">&lt;&lt; Remove</div>
<div class="t" style="left:6.6px;top:206.13px;font-size:10.6px">Select By:</div>
<div class="combo" style="left:6px;top:222px;width:135px;height:21px"></div>
<div class="t" style="left:10.8px;top:226.03px;font-size:10.6px">Nets</div>
<svg class="r" style="left:127px;top:230px" width="10" height="6" viewBox="0 0 10 6"><path d="M0.7 0.7 L5 5 L9.3 0.7" stroke="#333" stroke-width="1.05" fill="none"/></svg>
<div class="grp" style="left:6px;top:251px;width:384px;height:66px"></div>
<div class="gtbg" style="left:12px;top:245px;width:172px;height:12px"></div>
<div class="t" style="left:14.9px;top:245.33px;font-size:10.6px">Color by Net (Pads, Vias, Unroutes)</div>
<div class="t" style="left:23.6px;top:271.13px;font-size:10.6px">None</div>
<div class="radio" style="left:29.5px;top:287.5px"></div>
<div class="pal" style="left:57px;top:268px;width:262px;height:37px"></div>
<div class="sw" style="left:61.5px;top:271.6px;background:#000000"></div>
<div class="sw" style="left:77.6px;top:271.6px;background:#000080"></div>
<div class="sw" style="left:93.6px;top:271.6px;background:#008000"></div>
<div class="sw" style="left:109.7px;top:271.6px;background:#008080"></div>
<div class="sw" style="left:125.7px;top:271.6px;background:#800000"></div>
<div class="sw" style="left:141.8px;top:271.6px;background:#800080"></div>
<div class="sw" style="left:157.9px;top:271.6px;background:#808000"></div>
<div class="sw" style="left:173.9px;top:271.6px;background:#808080"></div>
<div class="sw" style="left:190.0px;top:271.6px;background:#c0c0c0"></div>
<div class="sw" style="left:206.0px;top:271.6px;background:#0000ff"></div>
<div class="sw" style="left:222.1px;top:271.6px;background:#00ff00"></div>
<div class="sw" style="left:238.2px;top:271.6px;background:#00ffff"></div>
<div class="sw" style="left:254.2px;top:271.6px;background:#ff0000"></div>
<div class="sw" style="left:270.3px;top:271.6px;background:#ff00ff"></div>
<div class="sw" style="left:286.3px;top:271.6px;background:#ffff00"></div>
<div class="sw" style="left:302.4px;top:271.6px;background:#ffffff"></div>
<div class="sw" style="left:61.5px;top:287.6px;background:#c8c000"></div>
<div class="sw" style="left:77.6px;top:287.6px;background:#1080c0"></div>
<div class="sw" style="left:93.6px;top:287.6px;background:#10c060"></div>
<div class="sw" style="left:109.7px;top:287.6px;background:#10c0c0"></div>
<div class="sw" style="left:125.7px;top:287.6px;background:#ff6060"></div>
<div class="sw" style="left:141.8px;top:287.6px;background:#8080c0"></div>
<div class="sw" style="left:157.9px;top:287.6px;background:#c06010"></div>
<div class="sw" style="left:173.9px;top:287.6px;background:#ff0080"></div>
<div class="sw" style="left:190.0px;top:287.6px;background:#c0c080"></div>
<div class="sw" style="left:206.0px;top:287.6px;background:#2080ff"></div>
<div class="sw" style="left:222.1px;top:287.6px;background:#80c080"></div>
<div class="sw" style="left:238.2px;top:287.6px;background:#a0ffff"></div>
<div class="sw" style="left:254.2px;top:287.6px;background:#ff9090"></div>
<div class="sw" style="left:270.3px;top:287.6px;background:#a0a0d0"></div>
<div class="sw" style="left:286.3px;top:287.6px;background:#ffa050"></div>
<div class="sw" style="left:302.4px;top:287.6px;background:#ff80c0"></div>
<div class="swsel" style="left:156.3px;top:286px"></div>
<div class="chk" style="left:6px;top:324px"></div>
<svg class="r" style="left:6px;top:324px" width="13" height="13" viewBox="0 0 13 13"><path d="M2.6 6.4 L5.2 9.2 L10.6 3.2" stroke="#222" stroke-width="1.2" fill="none"/></svg>
<div class="t" style="left:22.7px;top:323.93px;font-size:10.6px">Enable Color by Net</div>
<div class="chk" style="left:21px;top:343px"></div>
<svg class="r" style="left:21px;top:343px" width="13" height="13" viewBox="0 0 13 13"><path d="M2.6 6.4 L5.2 9.2 L10.6 3.2" stroke="#222" stroke-width="1.2" fill="none"/></svg>
<div class="t" style="left:37.7px;top:343.03px;font-size:10.6px">Include Net Colors on Traces</div>
<div class="grp" style="left:399px;top:212px;width:220px;height:122px"></div>
<div class="gtbg" style="left:405px;top:206px;width:62px;height:12px"></div>
<div class="t" style="left:407.2px;top:206.33px;font-size:10.6px">View Details</div>
<div class="chk" style="left:416px;top:224px"></div>
<svg class="r" style="left:416px;top:224px" width="13" height="13" viewBox="0 0 13 13"><path d="M2.6 6.4 L5.2 9.2 L10.6 3.2" stroke="#222" stroke-width="1.2" fill="none"/></svg>
<div class="t" style="left:433.3px;top:223.33px;font-size:10.6px">Traces Plus the Following Unroutes:</div>
<div class="grp" style="left:405px;top:244px;width:209px;height:84px"></div>
<div class="gtbg" style="left:411px;top:238px;width:108px;height:12px"></div>
<div class="t" style="left:413.4px;top:238.13px;font-size:10.6px">View Unroutes Details</div>
<div class="radio" style="left:415.7px;top:259.0px"></div>
<div class="t" style="left:432.6px;top:259.33px;font-size:10.6px">All</div>
<div class="radio sel" style="left:415.7px;top:274.9px"></div>
<div class="t" style="left:432.6px;top:275.33px;font-size:10.6px">All Except Connected Plane Nets</div>
<div class="radio" style="left:415.7px;top:291.0px"></div>
<div class="t" style="left:432.6px;top:291.33px;font-size:10.6px">Unrouted Pin Pairs</div>
<div class="radio" style="left:415.7px;top:306.9px"></div>
<div class="t" style="left:432.6px;top:307.33px;font-size:10.6px">None</div>
<div class="btn" style="left:297px;top:346px;width:73px;height:22px"></div>
<div class="t bt" style="left:297px;top:350.3px;width:73px;font-size:10.6px;text-align:center">OK</div>
<div class="btn dis" style="left:381px;top:346px;width:73px;height:22px"></div>
<div class="t bt" style="left:381px;top:350.3px;width:73px;font-size:10.6px;text-align:center;color:#838383">Apply</div>
<div class="btn" style="left:462px;top:346px;width:73px;height:22px"></div>
<div class="t bt" style="left:462px;top:350.3px;width:73px;font-size:10.6px;text-align:center">Cancel</div>
<div class="btn" style="left:546px;top:346px;width:73px;height:22px"></div>
<div class="t bt" style="left:546px;top:350.3px;width:73px;font-size:10.6px;text-align:center">Help</div>
<svg class="r" style="left:612px;top:365px" width="12" height="12" viewBox="0 0 12 12"><path d="M11.5 3.5 L3.5 11.5 M11.5 6.5 L6.5 11.5 M11.5 9.5 L9.5 11.5" stroke="#a8a8a8" stroke-width="1"/></svg>
</div></body></html>
